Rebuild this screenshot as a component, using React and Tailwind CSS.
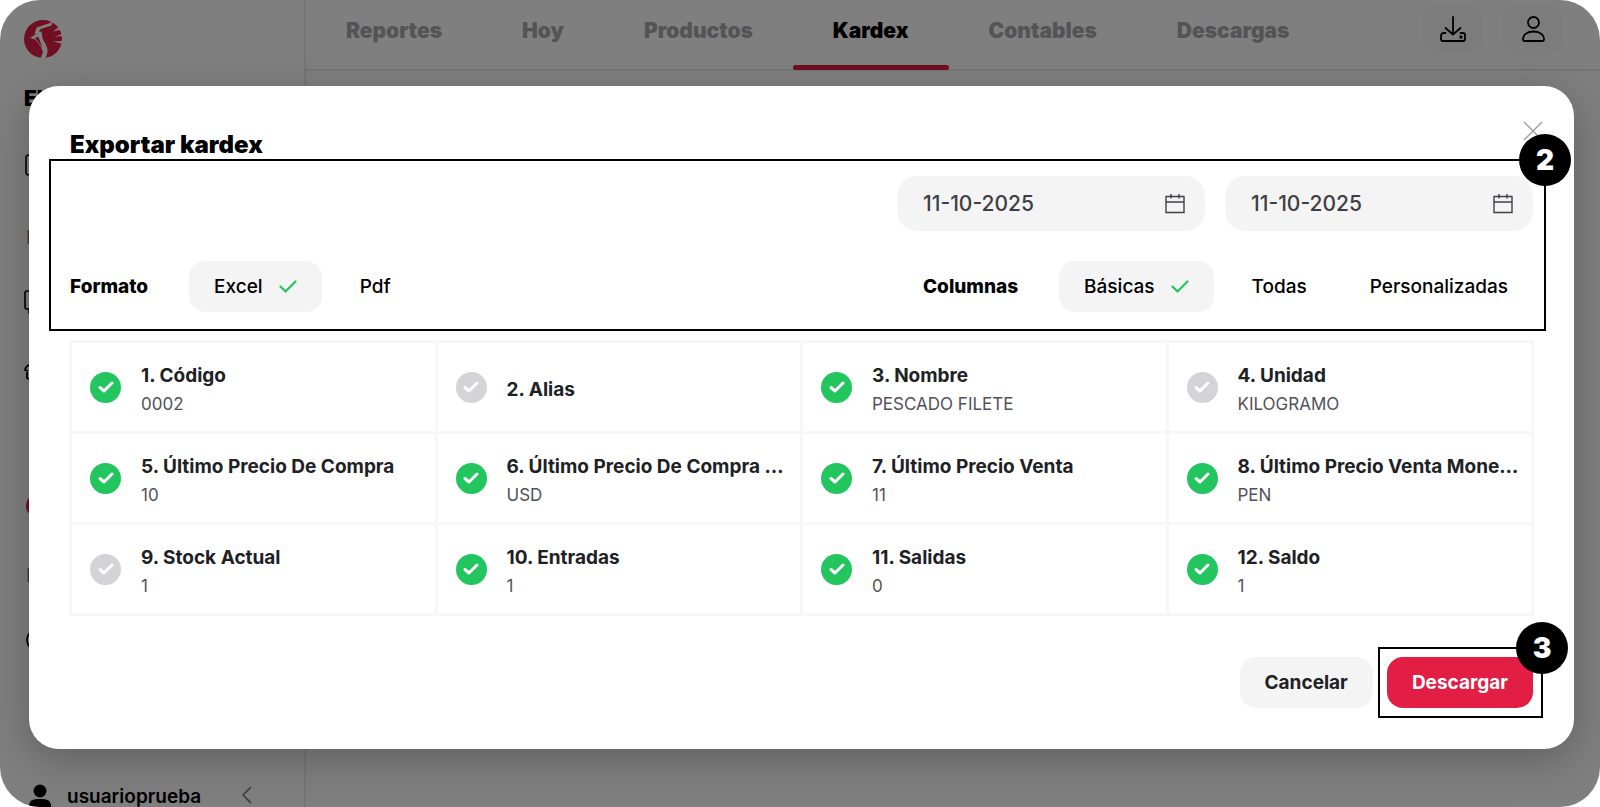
import { useState } from 'react'
import clsx from 'clsx'

const tabs = ['Reportes', 'Hoy', 'Productos', 'Kardex', 'Contables', 'Descargas']

const initialColumns = [
  { id: 1, title: 'Código', value: '0002', on: true },
  { id: 2, title: 'Alias', value: '', on: false },
  { id: 3, title: 'Nombre', value: 'PESCADO FILETE', on: true },
  { id: 4, title: 'Unidad', value: 'KILOGRAMO', on: false },
  { id: 5, title: 'Último Precio De Compra', value: '10', on: true },
  { id: 6, title: 'Último Precio De Compra Moneda', value: 'USD', on: true },
  { id: 7, title: 'Último Precio Venta', value: '11', on: true },
  { id: 8, title: 'Último Precio Venta Moneda', value: 'PEN', on: true },
  { id: 9, title: 'Stock Actual', value: '1', on: false },
  { id: 10, title: 'Entradas', value: '1', on: true },
  { id: 11, title: 'Salidas', value: '0', on: true },
  { id: 12, title: 'Saldo', value: '1', on: true },
]

function Logo() {
  return (
    <svg viewBox="0 0 38 38" className="size-[38px]" aria-hidden="true">
      <circle cx="19" cy="19" r="19" fill="#e31e44" />
      <g fill="#fff">
        <path d="M29 0.5 26 3 12.500 7.500 10.500 14 13.500 13 6 18 11.500 19.500 17 27 19 32 16.500 38.500 21 38.500C24 34 24.500 29 21.500 24L18.500 18.500 17.500 11.500 15 12 16.500 9 27.500 5.500Z" />
        <path d="M37.500 5 29 11.500 38.500 9ZM39 13.500 30 17 39 16ZM39 21 29 21.500 38.500 24Z" />
      </g>
      <path d="M11 17.500 14.500 17 18.500 28Z" fill="#e31e44" />
    </svg>
  )
}

function DownloadIcon() {
  return (
    <svg viewBox="0 0 26 26" className="size-[26px]" fill="none" stroke="currentColor" strokeWidth="1.800" strokeLinecap="round" strokeLinejoin="round" aria-hidden="true">
      <path d="M13 1v17M5.500 12 13 18.500 20.500 12" />
      <path d="M5.500 17H4q-3 0-3 3v3q0 2 2 2h20q2 0 2-2v-4q0-2-2-2h-2.500" />
      <circle cx="21" cy="21" r="0.800" fill="currentColor" />
    </svg>
  )
}

function ProfileIcon() {
  return (
    <svg viewBox="0 0 26 26" className="size-[26px]" fill="none" stroke="currentColor" strokeWidth="1.800" strokeLinecap="round" strokeLinejoin="round" aria-hidden="true">
      <circle cx="13.500" cy="6.500" r="5.500" />
      <path d="M3 23.500c0-5 4.500-8 10.500-8s10.500 3 10.500 8q0 1.500-1.500 1.500h-18q-1.500 0-1.500-1.500Z" />
    </svg>
  )
}

function CalendarIcon() {
  return (
    <svg viewBox="0 0 20 20" className="size-5" fill="none" stroke="#3f3f46" strokeWidth="1.400" aria-hidden="true">
      <path d="M1 2.500h18v16H1zM1 8h18M6 0v4.500M14 0v4.500" />
    </svg>
  )
}

function Tick() {
  return (
    <svg viewBox="0 0 18 14" className="h-[14px] w-[18px]" fill="none" stroke="#22c55e" strokeWidth="2.200" strokeLinecap="round" strokeLinejoin="round" aria-hidden="true">
      <path d="M1.500 6.500 6.500 11.500 16.500 1.500" />
    </svg>
  )
}

function Option({ label, active, onClick }) {
  return (
    <button type="button" aria-pressed={active} onClick={onClick}
      className={clsx('flex h-[51px] items-center gap-4 rounded-2xl px-[25px] text-[19px] font-medium text-black', active && 'bg-[#f4f4f4]')}>
      <span className="pt-0.5">{label}</span>
      {active && <Tick />}
    </button>
  )
}

function DateField({ id, label }) {
  return (
    <div className="flex h-[55px] w-[308px] items-center rounded-[20px] bg-[#f4f4f4] pr-5 pl-[26px]">
      <label htmlFor={id} className="hidden">{label}</label>
      <input id={id} type="text" defaultValue="11-10-2025"
        className="h-10 min-w-0 flex-1 bg-transparent text-[21px] font-medium text-[#3f3f46] outline-none" />
      <button type="button" aria-label={`Abrir calendario ${label}`}><CalendarIcon /></button>
    </div>
  )
}

function Badge({ children }) {
  return (
    <span className="absolute -top-[27px] -right-[27px] flex size-[52px] items-center justify-center rounded-full bg-black text-[28px] font-black text-white">
      {children}
    </span>
  )
}

function ColumnCell({ column, onToggle }) {
  return (
    <label className="flex h-[91px] min-w-0 items-center gap-5 border-r-[3px] border-b-[3px] border-[#f7f7f7] pr-3 pl-[18px]">
      <span className="relative flex size-[31px] shrink-0 items-center justify-center">
        <input type="checkbox" checked={column.on} onChange={onToggle}
          className="size-[31px] appearance-none rounded-full bg-[#d4d4d8] checked:bg-[#22c55e]" />
        <svg viewBox="0 0 16 12" className="pointer-events-none absolute h-3 w-4" fill="none" stroke="#fff" strokeWidth="3" strokeLinecap="round" strokeLinejoin="round" aria-hidden="true">
          <path d="M2 6.500 6 10 14 2" />
        </svg>
      </span>
      <span className="flex min-w-0 flex-col pt-1.5">
        <span className="truncate text-[19px] leading-[28px] font-bold text-[#202124]">{column.id}. {column.title}</span>
        {column.value && <span className="text-[17px] leading-[28px] text-[#52525b]">{column.value}</span>}
      </span>
    </label>
  )
}

function Sidebar() {
  return (
    <aside className="flex w-[306px] shrink-0 flex-col border-r-2 border-[#ebebeb] pt-5 pl-6">
      <Logo />
      <p className="mt-6 text-[21px] leading-[34px] font-black">El</p>
      <nav aria-label="Principal" className="flex flex-col items-start">
        <svg viewBox="0 0 24 24" className="mt-[38px] ml-px size-6" fill="none" stroke="#000" strokeWidth="1.600" aria-hidden="true">
          <rect x="1" y="1" width="22" height="20" rx="3" />
        </svg>
        <span className="mt-12 ml-[2px] text-[19px] leading-6 text-[#71717a]">I</span>
        <svg viewBox="0 0 24 24" className="mt-10 size-6" fill="none" stroke="#000" strokeWidth="1.600" strokeLinejoin="round" aria-hidden="true">
          <path d="M3 1h18q2 0 2 2v14q0 2-2 2H8l-3 4v-4H3q-2 0-2-2V3q0-2 2-2Z" />
        </svg>
        <svg viewBox="0 0 24 24" className="mt-12 size-6" fill="none" stroke="#000" strokeWidth="1.800" aria-hidden="true">
          <path d="M22 3H5Q2 4 1 8l3 1M3 10v6l4 2" />
        </svg>
        <span className="mt-[108px] ml-[2px] size-6 rounded-full bg-[#e31e44]" />
        <span className="mt-[46px] ml-[2px] text-[19px] leading-6 text-[#71717a]">I</span>
        <svg viewBox="0 0 24 24" className="mt-10 ml-[2px] size-6" fill="none" stroke="#000" strokeWidth="1.600" aria-hidden="true">
          <circle cx="12" cy="12" r="11" />
        </svg>
      </nav>
      <div className="mt-auto flex h-6 items-center gap-[15px] pr-[52px]">
        <svg viewBox="0 0 24 26" className="mt-1 ml-1 h-[26px] w-6 shrink-0" fill="#000" aria-hidden="true">
          <circle cx="12" cy="7" r="6.500" />
          <path d="M1 26V21q1-6 8-6h6q7 0 8 6v5Z" />
        </svg>
        <span className="flex-1 pt-1 text-[19px] leading-6 font-semibold">usuarioprueba</span>
        <button type="button" aria-label="Contraer menú">
          <svg viewBox="0 0 10 18" className="h-[18px] w-[10px]" fill="none" stroke="#8a8a90" strokeWidth="1.800" aria-hidden="true">
            <path d="M9 1 1 9l8 8" />
          </svg>
        </button>
      </div>
    </aside>
  )
}

function TopBar() {
  return (
    <header className="flex h-[71px] items-start justify-between border-b-2 border-[#ebebeb] pr-[37px]">
      <nav aria-label="Secciones" className="flex">
        {tabs.map(tab => (
          <a key={tab} href="#"
            className={clsx('relative flex h-[71px] items-start px-10 pt-[17px] text-[21px] leading-7 font-black', tab === 'Kardex' ? 'text-black' : 'text-[#a9a9ac]')}>
            {tab}
            {tab === 'Kardex' && <span className="absolute inset-x-0 bottom-[1px] h-[5px] rounded-full bg-[#e31e44]" />}
          </a>
        ))}
      </nav>
      <div className="flex gap-5 pt-1">
        <button type="button" aria-label="Descargas" className="flex h-[50px] w-[60px] items-center justify-center rounded-2xl bg-[#f8f8f8]"><DownloadIcon /></button>
        <button type="button" aria-label="Perfil" className="flex h-[50px] w-[60px] items-center justify-center rounded-2xl bg-[#f8f8f8]"><ProfileIcon /></button>
      </div>
    </header>
  )
}

function ExportDialog() {
  const [format, setFormat] = useState('Excel')
  const [preset, setPreset] = useState('Básicas')
  const [columns, setColumns] = useState(initialColumns)

  const toggle = id => setColumns(prev => prev.map(c => (c.id === id ? { ...c, on: !c.on } : c)))

  return (
    <section role="dialog" aria-modal="true" aria-labelledby="export-title"
      className="w-full rounded-[30px] bg-white px-[41px] pt-[35px] pb-[31px] shadow-[0_10px_40px_rgba(0,0,0,0.25)]">
      <div className="flex h-[38px] items-start justify-between">
        <h2 id="export-title" className="pt-2 text-[24px] leading-[32px] font-black text-black">Exportar kardex</h2>
        <button type="button" aria-label="Cerrar" className="-mr-[10px]">
          <svg viewBox="0 0 20 20" className="size-5" stroke="#a1a1aa" strokeWidth="1.500" aria-hidden="true">
            <path d="M1 1 19 19M19 1 1 19" />
          </svg>
        </button>
      </div>

      <div className="relative -mr-[13px] -ml-[21px] border-2 border-black pt-[15px] pr-[11px] pb-[17px] pl-[19px]">
        <div className="flex justify-end gap-5">
          <DateField id="date-from" label="Desde" />
          <DateField id="date-to" label="Hasta" />
        </div>
        <div className="mt-[30px] flex items-center justify-between">
          <div className="flex items-center gap-[13px]">
            <span className="mr-7 pt-0.5 text-[19px] font-extrabold text-black">Formato</span>
            {['Excel', 'Pdf'].map(f => <Option key={f} label={f} active={f === format} onClick={() => setFormat(f)} />)}
          </div>
          <div className="flex items-center gap-[13px]">
            <span className="mr-7 pt-0.5 text-[19px] font-extrabold text-black">Columnas</span>
            {['Básicas', 'Todas', 'Personalizadas'].map(p => <Option key={p} label={p} active={p === preset} onClick={() => setPreset(p)} />)}
          </div>
        </div>
        <Badge>2</Badge>
      </div>

      <div className="-mx-px mt-[9px] grid grid-cols-4 border-t-[3px] border-l-[3px] border-[#f7f7f7]">
        {columns.map(c => <ColumnCell key={c.id} column={c} onToggle={() => toggle(c.id)} />)}
      </div>

      <div className="mt-[31px] -mr-[10px] flex items-center justify-end gap-[5px]">
        <button type="button" className="h-[51px] rounded-2xl bg-[#f4f4f4] px-[25px] pt-0.5 text-[19px] font-bold text-[#202124]">Cancelar</button>
        <div className="relative border-2 border-black py-[8px] pr-[8px] pl-[7px]">
          <button type="button" className="block h-[51px] rounded-2xl bg-[#e31e44] px-[25px] pt-0.5 text-[19px] font-bold text-white">Descargar</button>
          <Badge>3</Badge>
        </div>
      </div>
    </section>
  )
}

export default function App() {
  return (
    <div className="relative h-screen overflow-hidden rounded-[40px] bg-white font-[Inter,sans-serif] text-black">
      <div className="flex h-full">
        <Sidebar />
        <main className="min-w-0 flex-1"><TopBar /></main>
      </div>
      <div className="absolute inset-0 flex items-start bg-black/50 pt-[86px] pr-[26px] pl-[29px]">
        <ExportDialog />
      </div>
    </div>
  )
}
